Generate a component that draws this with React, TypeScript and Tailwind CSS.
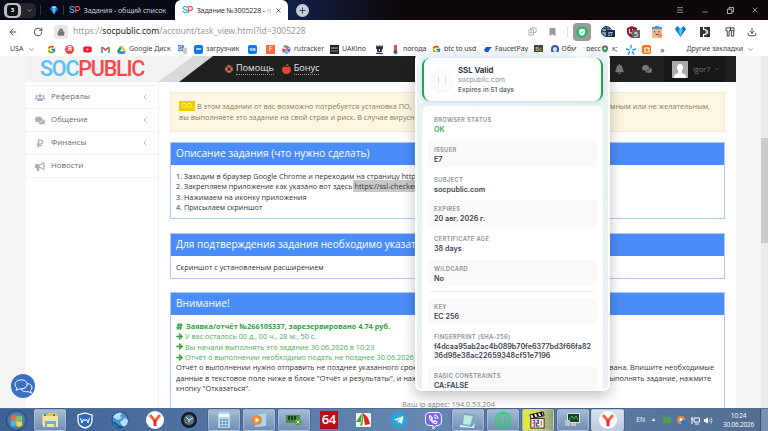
import type { ReactNode } from "react";
import { ArrowLeft, ChevronDown, ChevronLeft, Download, Lock, Menu, Minus, Plus, RotateCw, X } from "lucide-react";
import {
    FaArrowRight,
    FaAppleAlt,
    FaBell,
    FaBookmark,
    FaBullhorn,
    FaComments,
    FaHashtag,
    FaLifeRing,
    FaRubleSign,
    FaUsers,
    FaYoutube,
    FaBlogger,
    FaTelegramPlane,
    FaViber,
    FaChessRook,
} from "react-icons/fa";
import { FcGoogle } from "react-icons/fc";

function SpLogo() {
    return (
        <span className="flex font-['Roboto',sans-serif] text-[9.5px] leading-none font-medium tracking-[-0.6px]">
            <span className="text-[#45a5dd]">S</span>
            <span className="text-[#ee4646]">P</span>
        </span>
    );
}

function TitleBar() {
    return (
        <div className="flex h-5 shrink-0 bg-linear-to-r from-[#070a17] via-[#0a0a14] to-[#0d0709] font-['Noto_Sans',sans-serif] text-[7.1px]">
            <div className="flex w-[175px] items-center text-[#c9c9cd]">
                <div className="ml-1 flex h-[15px] w-8 items-center rounded-[5px] bg-[#25252d]">
                    <span className="flex h-[15px] w-[17px] items-center justify-center rounded-[5px] bg-[#bbbbc0]">
                        <span className="flex h-[11px] w-[11px] items-center justify-center rounded-[3px] bg-[#111] text-[6px] font-bold text-white">
                            3
                        </span>
                    </span>
                    <ChevronDown className="ml-[5px] h-[7px] w-[7px]" />
                </div>
                <span className="ml-1 h-2.5 w-px bg-[#34343a]" />
                <Gem className="ml-[9px] h-[9px] w-2" />
                <span className="ml-[5px] h-2.5 w-px bg-[#34343a]" />
                <div className="ml-[5px]">
                    <SpLogo />
                </div>
                <span className="ml-[4px] whitespace-nowrap tracking-[-0.08px]">Задания - общий список</span>
            </div>
            <div className="flex w-[113px] items-center rounded-t-md bg-white pl-[7px] text-[#333]">
                <SpLogo />
                <span className="ml-[4px] flex w-[78px] whitespace-nowrap tracking-[-0.12px]">
                    Задание №3005228 -<span className="ml-[2px] text-[#bbb]">п</span>
                </span>
                <X className="h-[7px] w-[7px]" strokeWidth={2.5} />
            </div>
            <div className="flex flex-1 items-center bg-linear-to-r from-[#10214b] to-[#0d0709] to-30% pl-[8px]">
                <span className="flex h-[13px] w-[13px] items-center justify-center rounded-full bg-[#c8ccd9] text-[#222]">
                    <Plus className="h-[9px] w-[9px]" />
                </span>
            </div>
            <div className="flex w-[96px] items-center justify-between bg-[#0d0709] pr-[9px] pl-[4px] text-[#ccc]">
                <Menu className="h-2 w-2" />
                <Minus className="mt-1 h-2 w-2" />
                <svg viewBox="0 0 8 8" className="h-[7px] w-[7px] fill-none stroke-current">
                    <path d="M2.5 2.5v-2h5v5h-2M.5 2.5h5v5h-5z" />
                </svg>
                <X className="h-2 w-2" />
            </div>
        </div>
    );
}

function Gem({ className }: { className: string }) {
    return (
        <svg viewBox="0 0 10 10" className={className}>
            <path d="M0 3 2 0h6l2 3-5 7z" fill="#1875cf" />
            <path d="m2 0 3 3 3-3z" fill="#d7f2ff" />
            <path d="M3 3h4l-2 7z" fill="#5cc4f7" />
        </svg>
    );
}

function Toolbar() {
    return (
        <div className="flex h-[23px] shrink-0 items-center rounded-tr-sm bg-white text-[#333]">
            <ArrowLeft className="ml-2 h-[10px] w-[10px]" />
            <RotateCw className="ml-[15px] h-[10px] w-[10px]" />
            <span className="ml-[11px] flex h-[14px] w-[14px] items-center justify-center rounded-[3px] bg-[#e9e9e9]">
                <Lock className="h-2 w-2 fill-[#777] text-[#777]" />
            </span>
            <span className="ml-[5px] font-['Noto_Sans',sans-serif] text-[8.5px] text-[#999]">
                https://<span className="text-[#222]">socpublic.com</span>/account/task_view.html?id=3005228
            </span>
            <div className="mr-[11px] ml-auto flex h-[23px] items-center">
                <svg viewBox="0 0 10 10" className="h-[9px] w-[9px] fill-none stroke-[#aaa]">
                    <path d="M3 3V1h6v5H6M1 3h5v6H1zM2 6h3M3.5 4.5v3" />
                </svg>
                <FaBookmark className="ml-[12px] h-[8px] w-[7px] text-[#999]" />
                <span className="ml-[11px] h-2.5 w-px bg-[#ddd]" />
                <span className="ml-[5px] flex h-[18px] w-[18px] items-center justify-center rounded-[4px] bg-[#9a9a9a]">
                    <svg viewBox="0 0 12 12" className="h-3 w-3">
                        <circle cx="6" cy="6" r="5.7" fill="#22b866" />
                        <path d="m6 2.7 3 1v2.2C9 8 7.6 9.1 6 9.7 4.4 9.1 3 8 3 5.9V3.7z" fill="#fff" />
                        <path d="m4.7 6 1 1 1.7-1.8" fill="none" stroke="#22b866" strokeWidth=".8" />
                    </svg>
                </span>
                <svg viewBox="0 0 14 12" className="ml-[10px] h-3 w-[14px]">
                    <circle cx="5.5" cy="5.5" r="5" fill="#829aab" stroke="#223a54" />
                    <path d="M0 5.5h11M5.5 0v11M2 2q3.5 2 7 0" fill="none" stroke="#223a54" />
                    <rect x="5" y="4" width="9" height="7" fill="#182c52" />
                    <text x="7" y="9.5" fontSize="5.5" fill="#fff" fontFamily="Noto Sans">IT</text>
                </svg>
                <svg viewBox="0 0 14 12" className="ml-[11px] h-3 w-[14px]">
                    <path d="m6 0 5 2v4c0 3-3 5-5 6-2-1-5-3-5-6V2z" fill="#9e1627" />
                    <path d="M3.5 3v4h3V3" fill="none" stroke="#fff" />
                    <rect x="6" y="4" width="8" height="8" fill="#666" />
                    <text x="8" y="10.5" fontSize="7" fill="#fff" fontFamily="Noto Sans">5</text>
                </svg>
                <svg viewBox="0 0 12 12" className="ml-[11px] h-3 w-3">
                    <path d="M1 2h10v10H1z" fill="#edb990" />
                    <path d="M1 1h3V0h4v1h3v2H1z" fill="#4894e5" />
                    <path d="M3.500 5v1.500M8 5v1.500M4.500 8q1.500 1.500 3 0" fill="none" stroke="#523b39" />
                    <circle cx="9" cy="9.5" r="2" fill="#f78d35" />
                </svg>
                <Gem className="ml-[12px] h-[11px] w-[11px]" />
                <svg viewBox="0 0 10 10" className="ml-[14px] h-[10px] w-[10px]">
                    <path d="M0 0h10v10H0z" fill="#333" />
                    <path d="M3.500 0v2.500H6M3.500 10V7.500H6M6 2.500v1.500h1.500v2H6v1.500" fill="none" stroke="#fff" strokeWidth="1.200" />
                </svg>
                <svg viewBox="0 0 11 11" className="ml-[15px] h-[10px] w-[10px] fill-none stroke-[#333]">
                    <path d="M1 1h5v3H4.500v6h-2V4H1zM6 1h4v3H6.500zM7 4v6h2.500V4" />
                </svg>
                <Download className="ml-[12px] h-[10px] w-[10px]" />
            </div>
        </div>
    );
}

const bookmarks: { width: string; icon: ReactNode; label?: string }[] = [
    { width: "w-[18px]", icon: <FcGoogle className="h-[9px] w-[9px]" /> },
    {
        width: "w-[18px]",
        icon: (
            <span className="flex h-[9px] w-[9px] items-center justify-center rounded-full bg-[#fa4130] text-[7px] font-bold text-white">
                Я
            </span>
        ),
    },
    { width: "w-[18px]", icon: <FaYoutube className="h-[9px] w-[9px] text-[#f31432]" /> },
    {
        width: "w-[16px]",
        icon: (
            <svg viewBox="0 0 9 7" className="h-[7px] w-[9px] fill-none" strokeWidth="1.6">
                <path d="M1 7V1" stroke="#3e83ed" />
                <path d="m1 1 3.5 3L8 1" stroke="#e63d31" />
                <path d="M8 1v6" stroke="#35a856" />
            </svg>
        ),
    },
    {
        width: "w-[61px]",
        icon: (
            <svg viewBox="0 0 10 10" className="h-[9px] w-[9px]">
                <path d="M3.5 1h3L10 7H7z" fill="#fac322" />
                <path d="M3.5 1 0 7l1.7 3L5 4z" fill="#119b57" />
                <path d="M3.5 7H10l-2 3H2z" fill="#3b81ed" />
            </svg>
        ),
        label: "Google Диск",
    },
    {
        width: "w-[16px]",
        icon: (
            <svg viewBox="0 0 10 10" className="h-[9px] w-[9px]">
                <path d="M0 0h6l2 7H0z" fill="#4a80df" />
                <path d="M5 3h5v7H6z" fill="#c7cbd2" />
                <path d="M4.5 2.5a2 2 0 1 0 0 2H3" fill="none" stroke="#fff" />
            </svg>
        ),
    },
    {
        width: "w-[54px]",
        icon: (
            <span className="flex h-[9px] w-[9px] items-center justify-center rounded-[2px] bg-[#087aed] text-[7px] font-bold text-white">
                ∞
            </span>
        ),
        label: "загрузчик",
    },
    {
        width: "w-[18px]",
        icon: (
            <span className="flex h-[9px] w-[9px] items-center justify-center rounded-[2px] bg-[#087aff] text-[5px] font-bold text-white">
                vк
            </span>
        ),
    },
    {
        width: "w-[16px]",
        icon: (
            <span className="flex h-[9px] w-[9px] items-center justify-center bg-[#f26c3e] text-[7px] text-white">
                F
            </span>
        ),
    },
    {
        width: "w-[48px]",
        icon: (
            <svg viewBox="0 0 10 10" className="h-[9px] w-[9px]">
                <path d="m5 5-4-4 4-1z" fill="#42ad55" />
                <path d="m5 5 0-5 4 3z" fill="#ee4564" />
                <path d="m5 5 5-1-2 5z" fill="#4a64d8" />
                <path d="m5 5 2 5-5-1z" fill="#38b8dc" />
                <path d="M5 5 1 9 0 4z" fill="#e2334f" />
            </svg>
        ),
        label: "rutracker",
    },
    {
        width: "w-[46px]",
        icon: (
            <svg viewBox="0 0 9 9" className="h-[9px] w-[9px]">
                <path d="M0 0h9v9H0z" fill="#182432" />
                <path d="M1 3h7" stroke="#e5c740" strokeWidth="1" />
                <path d="M1 6h7" stroke="#4a9bc7" strokeWidth="1" />
            </svg>
        ),
        label: "UAKino",
    },
    { width: "w-[15px]", icon: <FaChessRook className="h-[9px] w-[7px] text-[#27273d]" /> },
    {
        width: "w-[41px]",
        icon: (
            <svg viewBox="0 0 9 9" className="h-[9px] w-[9px]">
                <path d="M3 0h3v6H3z" fill="#e24d50" />
                <circle cx="4.5" cy="7" r="2" fill="#315e9e" />
            </svg>
        ),
        label: "погода",
    },
    { width: "w-[51px]", icon: <FcGoogle className="h-[9px] w-[9px]" />, label: "btc to usd" },
    {
        width: "w-[51px]",
        icon: (
            <svg viewBox="0 0 9 9" className="h-[9px] w-[9px]">
                <path d="M3 2h6L7 4l-3 5-3-4z" fill="#0d5bdd" />
            </svg>
        ),
        label: "FaucetPay",
    },
    {
        width: "w-[17px]",
        icon: (
            <span className="flex h-[9px] w-[9px] items-center justify-center bg-[#42493d] text-[6px] text-[#cfdf92]">
                Bc
            </span>
        ),
    },
    {
        width: "w-[50px]",
        icon: <span className="h-[9px] w-[9px] rounded-full border-2 border-[#3a62a4] bg-[#dce7fa]" />,
        label: "Обмен ресс",
    },
    {
        width: "w-[25px]",
        icon: (
            <svg viewBox="0 0 9 10" className="h-[9px] w-[8px]">
                <path d="M1 4a3.5 3.5 0 0 1 7 0c0 2-3.5 6-3.5 6S1 6 1 4" fill="#25a652" />
                <path d="M1 4a3.5 3.5 0 0 1 3.5-3.5V4z" fill="#e64235" />
                <path d="M4.500.5A3.500 3.500 0 0 1 8 4H4.500z" fill="#397ef0" />
                <circle cx="4.500" cy="4" r="1.300" fill="#fff" />
            </svg>
        ),
        label: "к;",
    },
    {
        width: "w-[16px]",
        icon: (
            <svg viewBox="0 0 10 10" className="h-[10px] w-[10px] stroke-[#2996f3]" strokeWidth="1.4">
                <path d="M5 0v3.500M0 4l3.500 1M10 4 6.500 5M2 9.500 4 6.500M8 9.500 6 6.500" />
            </svg>
        ),
    },
    {
        width: "w-[14px]",
        icon: (
            <span className="flex h-[9px] w-[9px] items-center justify-center rounded-[2px] bg-[#ff7414]">
                <FaBlogger className="h-[6px] w-[6px] text-white" />
            </span>
        ),
    },
];

function Bookmarks() {
    return (
        <div className="flex h-[13px] shrink-0 items-center bg-white font-['Noto_Sans',sans-serif] text-[7px] tracking-[-0.04px] whitespace-nowrap text-[#444]">
            <span className="ml-[10px] w-[18px]">USA</span>
            <ChevronDown className="mr-[12px] h-[7px] w-[7px]" />
            {bookmarks.map((bookmark, i) => (
                <span key={i} className={`flex shrink-0 items-center gap-[3px] ${bookmark.width}`}>
                    {bookmark.icon}
                    {bookmark.label}
                </span>
            ))}
            <span className="ml-[4px] text-[9px]">»</span>
            <span className="ml-auto">Другие закладки</span>
            <ChevronDown className="mr-[14px] ml-[4px] h-[7px] w-[7px]" />
        </div>
    );
}

function SiteHeader() {
    return (
        <header className="flex h-[26px] shrink-0 bg-[#202020] font-['Open_Sans',sans-serif]">
            <div className="w-[187px] shrink-0 bg-[#d9d9d9] [clip-path:polygon(0_0,100%_0,153px_100%,0_100%)]">
                <div className="flex h-[26px] w-[167px] items-center bg-[#f3f3f3] pl-[14px] [clip-path:polygon(0_0,100%_0,132px_100%,0_100%)]">
                    <span className="font-['Roboto',sans-serif] text-[21.5px] leading-[26px] font-medium tracking-[-1.2px] text-[#59bdf9]">
                        SOC<span className="text-[#fb464a]">PUBLIC</span>
                    </span>
                </div>
            </div>
            <nav className="flex h-[25px] items-center pl-[12px] text-[9.1px] text-[#e4e4e4]">
                <FaLifeRing className="h-2 w-2 text-[#e16e60]" />
                <span className="ml-[3px] border-b border-dotted border-[#999] leading-[12px]">Помощь</span>
                <FaAppleAlt className="ml-[8px] h-[10px] w-[9px] text-[#df4936]" />
                <span className="ml-[3px] border-b border-dotted border-[#999] leading-[12px]">Бонус</span>
            </nav>
            <div className="ml-auto flex h-[26px] w-[126px] items-center text-[#777]">
                <FaBell className="ml-[5px] h-[10px] w-[9px]" />
                <FaComments className="ml-[18px] h-[10px] w-[10px]" />
                <div className="ml-[12px] flex h-[26px] w-[61px] items-center bg-[#171717] pl-[8px]">
                    <svg viewBox="0 0 16 17" className="h-[17px] w-4">
                        <path d="M0 0h16v17H0z" fill="#aaa" />
                        <path d="M8 3c-2 0-3 1.300-3 3.500C5 8 5.500 9 6.300 10v2L3 13.300q-1 .7-1 3.700h12q0-3-1-3.700L9.700 12v-2C10.500 9 11 8 11 6.500 11 4.300 10 3 8 3" fill="#fff" />
                    </svg>
                    <span className="ml-[5px] text-[7.3px]">igor7</span>
                    <ChevronDown className="ml-[4px] h-[6px] w-[6px]" />
                </div>
            </div>
        </header>
    );
}

const menu = [
    { icon: FaUsers, label: "Рефералы", nested: true },
    { icon: FaComments, label: "Общение", nested: true },
    { icon: FaRubleSign, label: "Финансы", nested: true },
    { icon: FaBullhorn, label: "Новости", nested: false },
];

function Sidebar() {
    return (
        <aside className="w-[133px] shrink-0 border-r border-[#f0f2f2] pt-[3px] font-['Open_Sans',sans-serif] text-[7.9px] text-[#66696d]">
            <div className="border-t border-[#eef2f2]">
                {menu.map(({ icon: Icon, label, nested }) => (
                    <div key={label} className="flex h-[23px] items-center border-b border-[#eef2f2] pl-[9px]">
                        <Icon className="h-[9px] w-[10px] text-[#a8afb9]" />
                        <span className="ml-[6px]">{label}</span>
                        {nested && <ChevronLeft className="mr-[9px] ml-auto h-[8px] w-[8px] text-[#88909a]" />}
                    </div>
                ))}
            </div>
        </aside>
    );
}

function Panel({ title, className, children }: { title: string; className: string; children: ReactNode }) {
    return (
        <section className={`border border-[#a9cafc] bg-white ${className}`}>
            <h2 className="flex h-[22px] items-center bg-[#4b8df8] pl-[5px] text-[10.15px] whitespace-nowrap text-white">
                {title}
            </h2>
            <div className="pt-[6px] pr-[10px] pl-[5px] text-[7.3px] leading-[10.35px] whitespace-nowrap text-[#333]">
                {children}
            </div>
        </section>
    );
}

function Arrow() {
    return <FaArrowRight className="h-[7px] w-[7px] text-[#35a344]" stroke="currentColor" strokeWidth={50} />;
}

function Task() {
    return (
        <main className="flex-1 overflow-hidden pt-[10px] pr-[11px] pl-[11px] font-['Open_Sans',sans-serif]">
            <div className="h-[40px] border border-[#faebcc] bg-[#fcf6e2] pt-[8px] pr-[14px] pl-[8px] text-[7.3px] leading-[10.5px] whitespace-nowrap text-[#8f7a55]">
                <div className="flex justify-between">
                    <span className="flex">
                        <span className="mr-[2px] flex h-[10px] w-[16px] items-center justify-center bg-[#f8c900] text-[7px] text-[#fff9d9]">
                            ПО
                        </span>
                        В этом задании от вас возможно потребуется установка ПО,
                    </span>
                    <span>мным или не желательным,</span>
                </div>
                <div>вы выполняете это задание на свой страх и риск. В случае вирусного</div>
            </div>
            <Panel title="Описание задания (что нужно сделать)" className="mt-[10px] h-[77px]">
                <p>1. Заходим в браузер Google Chrome и переходим на страницу https://</p>
                <p>
                    2. Закрепляем приложение как указано вот здесь
                    <span className="bg-[#c8c8c8] py-px"> https://ssl-checker.com</span>
                </p>
                <p>3. Нажимаем на иконку приложения</p>
                <p>4. Присылаем скриншот</p>
            </Panel>
            <Panel title="Для подтверждения задания необходимо указать" className="mt-[14px] h-[46px]">
                <p>Скриншот с установленым расширением</p>
            </Panel>
            <Panel title="Внимание!" className="mt-[13px] h-[130px]">
                <div className="text-[#48ae55]">
                    <p className="flex items-center gap-[3px] font-bold text-[#35a344]">
                        <FaHashtag className="h-[7px] w-[7px]" stroke="currentColor" strokeWidth={40} />
                        Заявка/отчёт №266105337, зарезервировано 4.74 руб.
                    </p>
                    <p className="flex items-center gap-[2px]">
                        <Arrow />У вас осталось 00 д., 00 ч., 28 м., 50 с.
                    </p>
                    <p className="flex items-center gap-[2px]">
                        <Arrow />
                        Вы начали выполнять это задание 30.06.2026 в 10:23
                    </p>
                    <p className="flex items-center gap-[2px]">
                        <Arrow />
                        Отчёт о выполнении необходимо подать не позднее 30.06.2026
                    </p>
                </div>
                <p className="flex justify-between">
                    <span>Отчёт о выполнении нужно отправить не позднее указанного срока</span>
                    <span>вана. Впишите необходимые</span>
                </p>
                <p className="flex justify-between">
                    <span>данные в текстовое поле ниже в блоке "Отчёт и результаты", и наж</span>
                    <span className="mr-[3px]">ыполнять задание, нажмите</span>
                </p>
                <p>кнопку "Отказаться".</p>
                <p className="mt-[6px] ml-[7px] text-center text-[#888]">Ваш ip адрес: 194.0.53.204</p>
            </Panel>
        </main>
    );
}

function Field({ label, value, shaded }: { label: string; value: string; shaded?: boolean }) {
    return (
        <div className={`mb-[3.5px] rounded-[4px] pt-[5px] pr-[4px] pb-[3px] pl-[6px] ${shaded ? "bg-[#f9f9fa]" : ""}`}>
            <div className="text-[5.8px] leading-[7px] font-semibold tracking-[0.32px] text-[#8a949e] uppercase">
                {label}
            </div>
            <div
                className={`mt-[2px] text-[7.2px] leading-[9.3px] font-semibold break-all ${value === "OK" ? "text-[#3da852]" : "text-[#3c434d]"}`}
            >
                {value}
            </div>
        </div>
    );
}

function CertificatePopup() {
    return (
        <div className="absolute top-[52px] left-[415px] h-[339px] w-[195px] rounded-[7px] border-2 border-t-0 border-white bg-linear-[160deg] from-[#edf3fb] via-[#e4f3ef] to-[#efedf8] px-[5px] pt-[6px] font-['Inter',sans-serif] shadow-[0_5px_14px_rgba(0,0,0,0.25)]">
            <span className="absolute -top-[5px] left-[157px] h-[13px] w-[13px] rotate-45 bg-[#f8fafc]" />
            <div className="relative flex h-[43px] items-center rounded-[8px] border-x-2 border-[#21a453] bg-white shadow-[0_1px_4px_rgba(30,80,80,0.15)]">
                <span className="ml-[7px] flex h-[22px] w-[22px] items-center justify-center gap-[6px] rounded-full bg-[#fafbfc] shadow-[0_1px_3px_rgba(0,0,0,0.06)]">
                    <i className="h-[6px] w-px bg-[#d5dae0]" />
                    <i className="h-[6px] w-px bg-[#d5dae0]" />
                </span>
                <div className="ml-[5px] text-[#303943]">
                    <div className="text-[7.8px] leading-[10px] font-bold">SSL Valid</div>
                    <div className="text-[6.8px] leading-[10px] text-[#7f8a95]">socpublic.com</div>
                    <div className="text-[6.6px] leading-[10px] font-medium text-[#505a64]">Expires in 51 days</div>
                </div>
            </div>
            <div className="mt-[5px] h-[283px] overflow-hidden rounded-t-[7px] bg-white px-[6px] pt-[5px]">
                <Field label="Browser status" value="OK" />
                <Field label="Issuer" value="E7" shaded />
                <Field label="Subject" value="socpublic.com" />
                <Field label="Expires" value="20 авг. 2026 г." shaded />
                <Field label="Certificate age" value="38 days" />
                <Field label="Wildcard" value="No" shaded />
                <hr className="mx-[2px] mt-[5px] mb-[6px] border-[#eceef0]" />
                <Field label="Key" value="EC 256" shaded />
                <Field label="Fingerprint (SHA-256)" value="f4dcaa95ab2ac4b089b70fe6377bd3f66fa8236d98e38ac22659348cf51e7196" />
                <Field label="Basic constraints" value="CA:FALSE" shaded />
            </div>
        </div>
    );
}

function YandexIcon() {
    return (
        <svg viewBox="0 0 18 18" className="h-[18px] w-[18px]">
            <circle cx="9" cy="9" r="9" fill="#fff" />
            <path d="m4 4 5 6 5-6" fill="none" stroke="#fb6039" strokeWidth="2.800" />
            <path d="M9 9v6" stroke="#e82840" strokeWidth="3" />
        </svg>
    );
}

const apps: { open?: boolean; tint?: string; icon: ReactNode }[] = [
    {
        open: true,
        icon: (
            <svg viewBox="0 0 18 18" className="h-[18px] w-[18px]">
                <path d="M1 3h6l1-1h8v12H1z" fill="#e6c767" />
                <path d="M2 5h15v11H2z" fill="#f5e3a0" />
                <path d="M3 3h2v2H3zM12 3h2v2h-2z" fill="#438a4d" />
                <path d="M4 10h11v6h-2v-3H6v3H4z" fill="#62b4df" />
            </svg>
        ),
    },
    {
        icon: (
            <svg viewBox="0 0 16 17" className="h-[17px] w-4 fill-[#2e68bb] stroke-white">
                <path d="m8 1 7 2v5c0 4-3 7-7 8-4-1-7-4-7-8V3z" strokeWidth="1.300" />
                <path d="m3.500 6 1.500 5 1.500-4L8 9l1.500-2L11 11l1.500-5" fill="none" />
            </svg>
        ),
    },
    {
        icon: (
            <svg viewBox="0 0 18 18" className="h-[18px] w-[18px]">
                <circle cx="9" cy="9" r="8" fill="#4d95cf" stroke="#1b4f87" />
                <path d="M2 6c3-5 8-5 9-4L9 5l2 2-4 2zM9 11l5-4 3 2c0 4-2 6-5 7z" fill="#b9dff3" />
                <path d="M3 11q4 5 9 5" fill="none" stroke="#195084" strokeWidth="2" />
            </svg>
        ),
    },
    { icon: <YandexIcon /> },
    {
        icon: (
            <svg viewBox="0 0 16 16" className="h-4 w-4">
                <circle cx="8" cy="8" r="7" fill="#293642" stroke="#11191f" strokeWidth="2" />
                <circle cx="8" cy="8" r="5" fill="#5c7585" />
                <path d="m5 5 3 3 4-2M8 8v2" fill="none" stroke="#d3edf8" />
            </svg>
        ),
    },
    {
        open: true,
        icon: (
            <svg viewBox="0 0 14 16" className="h-4 w-[14px]">
                <rect x="1" width="12" height="16" rx="1" fill="#b9d4e5" />
                <path d="M2 2h10v3H2z" fill="#eef9ff" />
                <path d="M3 8h8M3 11h8M3 14h8" stroke="#6297bd" strokeWidth="2" strokeDasharray="2 1" />
            </svg>
        ),
    },
    {
        open: true,
        icon: (
            <svg viewBox="0 0 16 16" className="h-4 w-4">
                <path d="m4 3 11-2v13L4 15z" fill="#a6d9ef" />
                <circle cx="6" cy="8" r="5" fill="#f38523" />
                <path d="m4.500 5 4 3-4 3z" fill="#fff" />
            </svg>
        ),
    },
    {
        open: true,
        icon: (
            <svg viewBox="0 0 18 14" className="h-[14px] w-[18px]">
                <path d="M1 2h14v8H1z" fill="#488d3f" />
                <path d="M3 3h2v4H3zM6 3h2v4H6zM9 3h2v4H9z" fill="#193c23" />
                <circle cx="13" cy="9" r="3.500" fill="#4b9e43" />
                <path d="m11.500 7.500 3 3m0-3-3 3" stroke="#dcf4d6" />
            </svg>
        ),
    },
    {
        icon: (
            <span className="flex h-[18px] w-[18px] items-center justify-center bg-[#b41219] font-['Open_Sans'] text-[13px] font-semibold tracking-[-0.3px] text-white">
                64
            </span>
        ),
    },
    {
        icon: (
            <svg viewBox="0 0 17 16" className="h-4 w-[17px]">
                <rect x="1" y="1" width="15" height="14" rx="1" fill="#f5f2ec" />
                <path d="M7 1 1 10h5z" fill="#35a037" />
                <path d="M7 1q6 2 8 11l-5 1Q9 5 7 1" fill="#df2427" />
                <path d="M7 1q2 5 0 13l-2-1q3-5 2-12" fill="#45a837" />
            </svg>
        ),
    },
    {
        icon: (
            <span className="flex h-[16px] w-[16px] items-center justify-center rounded-full bg-[#2aa4db]">
                <FaTelegramPlane className="h-[10px] w-[10px] text-white" />
            </span>
        ),
    },
    {
        icon: (
            <svg viewBox="0 0 17 17" className="h-[17px] w-[17px]">
                <path d="M5 .5h7q4.500 0 4.500 4.500v4q0 4.500-4.500 4.500h-1L8 17v-3.500H5Q.500 13.500.500 9V5Q.500.500 5 .5" fill="#7764e4" stroke="#fff" />
                <path d="M5 3.500c-2 1 1 7 5 8q2 .5 2-1.500l-2-1.500-1 1Q7 8.500 6.500 7l1-1zM9 3q4 0 4 4M9 5q2 0 2 2" fill="none" stroke="#fff" strokeWidth="1.100" />
            </svg>
        ),
    },
    {
        open: true,
        icon: (
            <svg viewBox="0 0 18 17" className="h-[17px] w-[18px]">
                <path d="m5 1 11 2-3 12-11-2z" fill="#6caec0" />
                <path d="m5 3 9 1-3 9-7-1z" fill="#c2e6e3" />
                <path d="m1 13 12 2 3-4-1 5-14-1z" fill="#e8f5f5" />
            </svg>
        ),
    },
    {
        open: true,
        icon: (
            <svg viewBox="0 0 18 18" className="h-[18px] w-[18px] fill-none stroke-[#31ce72]">
                <circle cx="9" cy="9" r="8" />
                <ellipse cx="7" cy="9" rx="4" ry="7.500" />
                <ellipse cx="11" cy="9" rx="4" ry="7.500" />
                <ellipse cx="9" cy="9" rx="4" ry="7.500" />
            </svg>
        ),
    },
    {
        open: true,
        tint: "bg-linear-to-r from-[#e8e730] via-[#d7d76b] to-[#8b9d83]",
        icon: (
            <svg viewBox="0 0 18 19" className="h-[18px] w-[17px]">
                <path d="m1 4 14-3 1 4L2 8z" fill="#eee" stroke="#111" />
                <path d="m4 3 2 4m2-5 2 4m2-5 2 4" stroke="#111" strokeWidth="2" />
                <rect x="2" y="8" width="14" height="10" fill="#fff" stroke="#222" />
                <path d="M4 10h2v3H4m2 0v3H4" fill="none" stroke="#e54632" strokeWidth="1.500" />
                <path d="M8 10h2v3H8v3h3" fill="none" stroke="#2d65bd" strokeWidth="1.500" />
                <path d="M13 10v6" stroke="#e4762b" strokeWidth="1.500" />
            </svg>
        ),
    },
    {
        open: true,
        icon: (
            <svg viewBox="0 0 18 16" className="h-4 w-[18px]">
                <path d="M3 1h13v10H3z" fill="#dce5e5" />
                <path d="M4 2h11v8H4z" fill="#173f29" />
                <path d="m5 8 3-4 2 3 2-3 2 4" fill="none" stroke="#39bc4b" />
                <path d="M7 11h5v3H7zM1 8h5v6H1z" fill="#b7c4c8" />
            </svg>
        ),
    },
    { open: true, tint: "bg-linear-to-b from-[#dae4ef] to-[#bac9dc]", icon: <YandexIcon /> },
];

function Taskbar() {
    return (
        <div className="relative flex h-[23px] shrink-0 items-center border-t border-[#516f91] bg-linear-to-r from-[#3d6194] via-[#6587b2] via-55% to-[#526d91]">
            <div className="flex w-[32.5px] justify-center">
                <span className="flex h-[21px] w-[21px] items-center justify-center rounded-full border border-[#224775] bg-radial from-[#7dbbdf] to-[#234d7b]">
                    <svg viewBox="0 0 14 14" className="h-[13px] w-[13px]">
                        <path d="M1 2q3-2 5-.5V7H1z" fill="#ee6936" />
                        <path d="M7 2q3 1.500 6-.500V7H7z" fill="#8cc152" />
                        <path d="M1 8h5v5.500Q3 12 1 13z" fill="#54b6e7" />
                        <path d="M7 8h6v4.500Q10 14.500 7 13z" fill="#ffd33a" />
                    </svg>
                </span>
            </div>
            {apps.map((app, i) => (
                <div key={i} className="flex w-[34.87px] shrink-0 justify-center">
                    <div
                        className={`flex h-[22px] w-[32.5px] items-center justify-center ${app.open ? "rounded-[2px] border border-[#b7c9df]/60 shadow-[0_0_0_0.5px_#38557c]" : ""} ${app.tint ?? (app.open ? "bg-linear-to-b from-[#a5bad3] to-[#718eb5]" : "")}`}
                    >
                        {app.icon}
                    </div>
                </div>
            ))}
            <div className="ml-auto flex items-center font-['Open_Sans',sans-serif] text-[6.8px] text-white">
                <span>EN</span>
                <span className="ml-[6px] text-[5px]">▲</span>
                <span className="ml-[7px] h-[6px] w-2 bg-[#4ca247]" />
                <svg viewBox="0 0 9 9" className="ml-[6px] h-[9px] w-[9px]">
                    <circle cx="4" cy="4" r="4" fill="#f38332" />
                    <circle cx="4" cy="3.500" r="1.500" fill="#fff" />
                    <circle cx="6.500" cy="6.500" r="2.500" fill="#1979e3" />
                </svg>
                <svg viewBox="0 0 9 9" className="ml-[5px] h-[9px] w-[9px] fill-none stroke-white">
                    <path d="M3 2h5.500v4H3zM1 1v7M0 3h2M4 8h4" />
                </svg>
                <svg viewBox="0 0 9 9" className="ml-[4px] h-[9px] w-[9px] fill-white stroke-white">
                    <path d="M0 3.500h1.500L3.500 2v5L1.500 5.500H0z" />
                    <path d="M5.500 3q1 1.500 0 3M7 1.500q2 3 0 6" fill="none" strokeWidth=".7" />
                </svg>
                <span className="mr-[4px] ml-[8px] w-[35px] text-center text-[6.400px] leading-[9.500px] tracking-[-0.15px]">
                    10:24
                    <br />
                    30.06.2026
                </span>
                <span className="h-[22px] w-2 border-l border-[#385273] bg-[#7891af]" />
            </div>
        </div>
    );
}

export default function App() {
    return (
        <div className="relative flex h-[431px] w-[768px] flex-col overflow-hidden bg-white">
            <TitleBar />
            <Toolbar />
            <Bookmarks />
            <div className="flex h-[352px] shrink-0 overflow-hidden bg-[#f5f5f5] pl-[26px]">
                <div className="flex w-[710px] flex-col bg-white">
                    <SiteHeader />
                    <div className="flex flex-1">
                        <Sidebar />
                        <Task />
                    </div>
                </div>
                <div className="ml-auto w-[7px] bg-[#ececec] pt-[82px]">
                    <div className="h-[105px] bg-[#cbcbcb]" />
                </div>
            </div>
            <CertificatePopup />
            <div className="absolute top-[374px] left-[11px] flex h-6 w-6 items-center justify-center rounded-full bg-[#3970c3]">
                <svg viewBox="0 0 20 16" className="h-[15px] w-[19px] fill-[#3970c3] stroke-white">
                    <path d="M7.500 1C3.500 1 1 3 1 6q0 2 2 3.500L2 12l4-1.500h1.500c4 0 6.500-2 6.500-4.700S11.500 1 7.500 1" />
                    <path d="M14 5c3 0 5 1.500 5 4.500q0 1.500-1.500 3l1 2.500-3.500-1.500C11 14 8 13 7.500 10.500 12 10.500 14 8 14 5" />
                </svg>
            </div>
            <Taskbar />
        </div>
    );
}
